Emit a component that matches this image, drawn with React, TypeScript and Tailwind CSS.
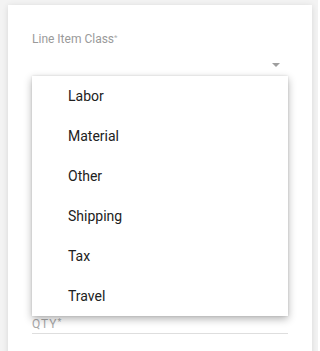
import React from "react";

const items = ["Labor", "Material", "Other", "Shipping", "Tax", "Travel"];

export default function App() {
  return (
    <div
      className="w-[318px] h-[351px] overflow-hidden bg-[#f3f3f3] pt-[5px] pl-2"
      style={{ fontFamily: "Roboto, 'Liberation Sans', sans-serif" }}
    >
      <div className="relative w-[304px] h-[360px] bg-white shadow-[0_1px_6px_rgba(0,0,0,0.12)] pt-[26px] px-6">
        <div className="text-[12px] leading-[14px] text-[#9a9a9a] whitespace-nowrap">
          Line Item Class
          <span className="text-[8px] align-[3px] text-[#b0b0b0]">*</span>
        </div>
        <div className="h-[31px] border-b border-[#dcdcdc] flex justify-end pr-2 pt-[17px]">
          <svg width="8" height="4" viewBox="0 0 8 4">
            <path d="M0 0 L8 0 L4 4 Z" fill="#9e9e9e" />
          </svg>
        </div>
        <div className="h-[238px]" />
        <div className="text-[12px] leading-[14px] text-[#a8a8a8] tracking-[1px]">
          QTY<span className="text-[9px] align-[3px]">*</span>
        </div>
        <div className="h-[3px] border-b border-[#dedede]" />

        <div className="absolute left-6 top-[71px] w-[256px] bg-white shadow-[0_3px_8px_rgba(0,0,0,0.3),0_0_2px_rgba(0,0,0,0.12)]">
          {items.map((it) => (
            <div
              key={it}
              className="h-10 flex items-center pl-9 text-[14px] text-[#212121]"
            >
              {it}
            </div>
          ))}
        </div>
      </div>
    </div>
  );
}
